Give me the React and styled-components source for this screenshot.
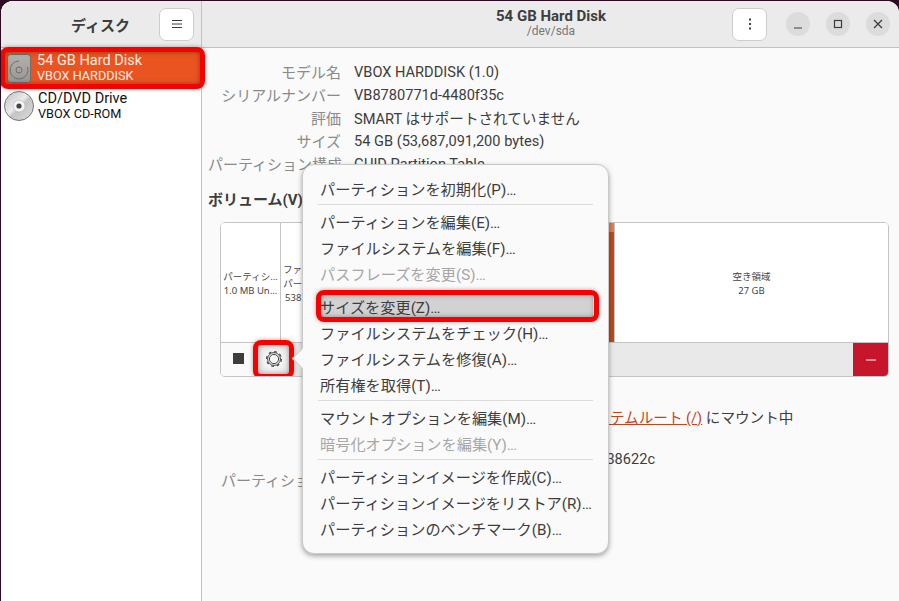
import React from "react";
import styled, {createGlobalStyle} from "styled-components";

const GlobalStyle = createGlobalStyle`
html, body {
    margin: 0;
    height: 100%;
    background: #2c0a22;
    font-family: Roboto, "Noto Sans CJK JP", sans-serif;
    font-size: 15px;
    color: #3d3d3d;
    overflow: hidden;
}
`;

const Window = styled.div`
position: relative;
display: flex;
box-sizing: border-box;
width: 898px;
height: 600px;
margin: 1px 0 0 1px;
border-radius: 12px 12px 0 0;
overflow: hidden;
background: #fafafa;
`;

const Sidebar = styled.aside`
display: flex;
flex-direction: column;
flex: 0 0 200px;
background: #fff;
border-right: 1px solid #c2c2c2;
`;

const Main = styled.main`
display: flex;
flex-direction: column;
flex: 1;
min-width: 0;
`;

const Header = styled.header`
display: grid;
grid-template-columns: 1fr auto 1fr;
align-items: center;
box-sizing: border-box;
height: 47px;
flex: none;
padding: ${(p) => (p.$main ? "0 9px 0 10px" : "0 7px 0 6px")};
background: #ebebeb;
border-bottom: 1px solid #c2c2c2;
`;

const SideTitle = styled.div`
grid-column: 2;
font-weight: 700;
font-size: 15px;
`;

const HeaderEnd = styled.div`
grid-column: 3;
display: flex;
align-items: center;
justify-content: flex-end;
`;

const HeadButton = styled.button`
display: flex;
align-items: center;
justify-content: center;
width: 35px;
height: 33px;
padding: 0;
background: #fff;
border: 1px solid #cdcdcd;
border-radius: 7px;
`;

const TitleBlock = styled.div`
grid-column: 2;
text-align: center;
line-height: 15px;
`;

const Title = styled.div`
font-weight: 700;
font-size: 15px;
`;

const Subtitle = styled.div`
font-size: 12px;
color: #777;
`;

const WindowButton = styled.button`
display: flex;
align-items: center;
justify-content: center;
width: 24px;
height: 24px;
margin-left: 16px;
padding: 0;
border: 0;
border-radius: 50%;
background: #dcdcdc;
`;

const MenuSpacer = styled.div`
width: 3px;
`;

const DeviceList = styled.div`
display: flex;
flex-direction: column;
padding-top: 3px;
`;

const Device = styled.div`
position: relative;
display: flex;
align-items: center;
gap: 3px;
height: ${(p) => (p.$selected ? "34px" : "36px")};
margin-bottom: ${(p) => (p.$selected ? "3px" : "0")};
padding-left: ${(p) => (p.$selected ? "6px" : "3px")};
background: ${(p) => (p.$selected ? "#e95420" : "transparent")};
color: ${(p) => (p.$selected ? "#fff" : "#111")};
`;

const DeviceText = styled.div`
margin-left: ${(p) => (p.$selected ? "3px" : "1px")};
line-height: 15px;
font-size: 14.5px;
opacity: ${(p) => (p.$selected ? 0.9 : 1)};
`;

const DeviceSub = styled.div`
font-size: 12.7px;
`;

const Highlight = styled.span`
position: absolute;
box-sizing: border-box;
top: ${(p) => p.$top}px;
right: ${(p) => p.$right}px;
bottom: ${(p) => p.$bottom}px;
left: ${(p) => p.$left}px;
border: 5px solid #f60000;
border-radius: 8px;
box-shadow: 0 0 4px rgba(0, 0, 0, 0.35), inset 0 0 5px rgba(0, 0, 0, 0.35);
pointer-events: none;
`;

const Content = styled.div`
flex: 1;
padding: 12px 10px 0 6px;
`;

const Details = styled.dl`
display: grid;
grid-template-columns: ${(p) => p.$label}px 1fr;
column-gap: 13px;
grid-auto-rows: ${(p) => p.$row}px;
align-items: center;
margin: 0;
white-space: nowrap;
`;

const Label = styled.dt`
text-align: right;
color: #8a8a8a;
`;

const Value = styled.dd`
margin: 0;
font-size: 14.6px;
color: #3d3d3d;
`;

const SectionTitle = styled.h2`
margin: 15px 0 11px;
font-size: 15px;
line-height: 21px;
font-weight: 700;
color: #3d3d3d;
`;

const VolumeBox = styled.div`
margin-left: 12px;
border: 1px solid #c4c4c4;
border-radius: 5px;
overflow: hidden;
`;

const VolumeMap = styled.div`
display: flex;
height: 119px;
background: #fff;
border-bottom: 1px solid #c4c4c4;
`;

const Partition = styled.div`
display: flex;
flex-direction: column;
align-items: center;
justify-content: center;
box-sizing: border-box;
flex: ${(p) => (p.$width ? `0 0 ${p.$width}px` : "1")};
padding-top: 2px;
font-family: "Noto Sans", "Noto Sans CJK JP", sans-serif;
font-size: 9.5px;
line-height: 14px;
color: #444;
white-space: nowrap;
overflow: hidden;
border-right: ${(p) => (p.$last ? "0" : "1px solid #c4c4c4")};
background: ${(p) => (p.$active ? "linear-gradient(#d8805f 0 9px, #c24a1c 9px, #bd491d)" : "#fff")};
`;

const VolumeToolbar = styled.div`
display: flex;
height: 33px;
background: #e9e9e9;
`;

const ToolButton = styled.button`
position: relative;
display: flex;
align-items: center;
justify-content: center;
width: 35px;
padding: 0 0 2px;
border: 0;
background: ${(p) => (p.$active ? "radial-gradient(#f6f6f6 30%, #d8d8d8)" : "#fafafa")};
`;

const DeleteButton = styled.button`
display: flex;
align-items: center;
justify-content: center;
width: 35px;
margin-left: auto;
padding: 0;
border: 0;
background: #c7162b;
`;

const StopIcon = styled.span`
width: 11px;
height: 11px;
background: #3d3d3d;
`;

const LowerDetails = styled.div`
margin: 8px 0 0 13px;
`;

const VolumeLink = styled.a`
color: #c7431a;
text-decoration: underline;
`;

const Popover = styled.div`
position: absolute;
top: 163px;
left: 301px;
box-sizing: border-box;
width: 307px;
height: 390px;
padding: 10px 15px 0;
font-size: 15.2px;
background: #fafafa;
border: 1px solid #c9c9c9;
border-radius: 12px;
box-shadow: 0 2px 5px rgba(0, 0, 0, 0.35);
`;

const PopoverArrow = styled.span`
position: absolute;
top: 186px;
left: -8px;
width: 14px;
height: 14px;
background: #fafafa;
border-left: 1px solid #c9c9c9;
border-bottom: 1px solid #c9c9c9;
transform: rotate(45deg);
`;

const MenuItem = styled.div`
position: relative;
display: flex;
align-items: center;
height: 26px;
padding-left: 2px;
white-space: nowrap;
color: ${(p) => (p.$disabled ? "#a6a6a6" : "#3d3d3d")};
background: ${(p) => (p.$active ? "#d2d2d2" : "transparent")};
`;

const MenuSeparator = styled.hr`
height: 1px;
margin: 3px 0;
border: 0;
background: #dcdcdc;
`;

const MenuHiddenSeparator = styled.div`
height: 7px;
`;

const HardDiskIcon = () => (
    <svg width="24" height="29" viewBox="0 0 24 29">
        <defs>
            <linearGradient id="hdd" x1="0" y1="0" x2="0" y2="1">
                <stop offset="0" stopColor="#b4b0ac" />
                <stop offset="1" stopColor="#989693" />
            </linearGradient>
        </defs>
        <rect x="0.5" y="0.5" width="23" height="28" rx="3" fill="url(#hdd)" stroke="#6f6c69" />
        <path d="M12 7a9 9 0 1 0 8.5 6" fill="none" stroke="#716e6a" strokeWidth="1" />
        <circle cx="12" cy="16" r="3" fill="none" stroke="#716e6a" />
    </svg>
);

const CdIcon = () => (
    <svg width="30" height="30" viewBox="0 0 30 30">
        <defs>
            <linearGradient id="cd" x1="0" y1="0" x2="1" y2="1">
                <stop offset="0" stopColor="#bdbdbd" />
                <stop offset="0.45" stopColor="#ececec" />
                <stop offset="0.55" stopColor="#c4c4c4" />
                <stop offset="1" stopColor="#dedede" />
            </linearGradient>
        </defs>
        <circle cx="15" cy="15" r="14.5" fill="url(#cd)" stroke="#777" />
        <circle cx="15" cy="15" r="6" fill="#f4f4f4" stroke="#aaa" strokeWidth="0.5" />
        <circle cx="15" cy="15" r="2.6" fill="#444" />
    </svg>
);

const HamburgerIcon = () => (
    <svg width="12" height="12" viewBox="0 0 12 12" stroke="#3d3d3d" strokeWidth="1">
        <path d="M1 2.5h10M1 6h10M1 9.5h10" />
    </svg>
);

const KebabIcon = () => (
    <svg width="4" height="12" viewBox="0 0 4 12" fill="#3d3d3d">
        <rect x="1" y="0.5" width="2" height="2" />
        <rect x="1" y="5" width="2" height="2" />
        <rect x="1" y="9.5" width="2" height="2" />
    </svg>
);

const MinimizeIcon = () => (
    <svg width="10" height="10" viewBox="0 0 10 10" stroke="#3d3d3d" strokeWidth="1.2">
        <path d="M1 9h8" />
    </svg>
);

const MaximizeIcon = () => (
    <svg width="10" height="10" viewBox="0 0 10 10" fill="none" stroke="#3d3d3d" strokeWidth="1.2">
        <rect x="1.5" y="1.5" width="7" height="7" />
    </svg>
);

const CloseIcon = () => (
    <svg width="10" height="10" viewBox="0 0 10 10" stroke="#3d3d3d" strokeWidth="1.3">
        <path d="M1 1l8 8M9 1L1 9" />
    </svg>
);

const RemoveIcon = () => (
    <svg width="10" height="10" viewBox="0 0 10 10" stroke="#fff" strokeWidth="1.2">
        <path d="M0 5h10" />
    </svg>
);

const GearIcon = () => (
    <svg width="18" height="18" viewBox="0 0 18 18" fill="none" stroke="#444">
        <circle cx="9" cy="9" r="4.6" strokeWidth="1" />
        <circle cx="9" cy="9" r="6.4" strokeWidth="1" />
        <circle cx="9" cy="9" r="7.4" strokeWidth="1.2" strokeDasharray="2.9 2.9" />
    </svg>
);

const menuGroups = [
    [{text: "パーティションを初期化(P)…"}],
    [
        {text: "パーティションを編集(E)…"},
        {text: "ファイルシステムを編集(F)…"},
        {text: "パスフレーズを変更(S)…", disabled: true},
    ],
    [
        {text: "サイズを変更(Z)…", active: true},
        {text: "ファイルシステムをチェック(H)…"},
        {text: "ファイルシステムを修復(A)…"},
        {text: "所有権を取得(T)…"},
    ],
    [
        {text: "マウントオプションを編集(M)…"},
        {text: "暗号化オプションを編集(Y)…", disabled: true},
    ],
    [
        {text: "パーティションイメージを作成(C)…"},
        {text: "パーティションイメージをリストア(R)…"},
        {text: "パーティションのベンチマーク(B)…"},
    ],
];

const App = () => {
    return (
        <>
            <GlobalStyle />
            <Window>
                <Sidebar>
                    <Header>
                        <SideTitle>ディスク</SideTitle>
                        <HeaderEnd>
                            <HeadButton><HamburgerIcon /></HeadButton>
                        </HeaderEnd>
                    </Header>
                    <DeviceList>
                        <Device $selected>
                            <HardDiskIcon />
                            <DeviceText $selected>
                                54 GB Hard Disk
                                <DeviceSub>VBOX HARDDISK</DeviceSub>
                            </DeviceText>
                            <Highlight $top={-4} $right={-4} $bottom={-4} $left={-1} />
                        </Device>
                        <Device>
                            <CdIcon />
                            <DeviceText>
                                CD/DVD Drive
                                <DeviceSub>VBOX CD-ROM</DeviceSub>
                            </DeviceText>
                        </Device>
                    </DeviceList>
                </Sidebar>
                <Main>
                    <Header $main>
                        <TitleBlock>
                            <Title>54 GB Hard Disk</Title>
                            <Subtitle>/dev/sda</Subtitle>
                        </TitleBlock>
                        <HeaderEnd>
                            <HeadButton><KebabIcon /></HeadButton>
                            <MenuSpacer />
                            <WindowButton><MinimizeIcon /></WindowButton>
                            <WindowButton><MaximizeIcon /></WindowButton>
                            <WindowButton><CloseIcon /></WindowButton>
                        </HeaderEnd>
                    </Header>
                    <Content>
                        <Details $label={133} $row={23}>
                            <Label>モデル名</Label><Value>VBOX HARDDISK (1.0)</Value>
                            <Label>シリアルナンバー</Label><Value>VB8780771d-4480f35c</Value>
                            <Label>評価</Label><Value>SMART はサポートされていません</Value>
                            <Label>サイズ</Label><Value>54 GB (53,687,091,200 bytes)</Value>
                            <Label>パーティション構成</Label><Value>GUID Partition Table</Value>
                        </Details>
                        <SectionTitle>ボリューム(V)</SectionTitle>
                        <VolumeBox>
                            <VolumeMap>
                                <Partition $width={60}>
                                    <div>パーティシ…</div>
                                    <div>1.0 MB Un…</div>
                                </Partition>
                                <Partition $width={60}>
                                    <div>ファイルシ…</div>
                                    <div>パーティシ…</div>
                                    <div>538 MB Fi…</div>
                                </Partition>
                                <Partition $width={274} $active />
                                <Partition $last>
                                    <div>空き領域</div>
                                    <div>27 GB</div>
                                </Partition>
                            </VolumeMap>
                            <VolumeToolbar>
                                <ToolButton><StopIcon /></ToolButton>
                                <ToolButton $active>
                                    <GearIcon />
                                    <Highlight $top={-3} $right={-3} $bottom={-3} $left={-3} />
                                </ToolButton>
                                <DeleteButton>
                                    <RemoveIcon />
                                </DeleteButton>
                            </VolumeToolbar>
                        </VolumeBox>
                        <LowerDetails>
                            <Details $label={146} $row={21}>
                                <Label /><Value />
                                <Label />
                                <Value>Ext4 (バージョン 1.0) <VolumeLink>ファイルシステムルート (/)</VolumeLink> にマウント中</Value>
                                <Label /><Value />
                                <Label /><Value>371a6c2e-90bd-4e17-a5d2-7cb1e838622c</Value>
                                <Label>パーティションタイプ</Label><Value />
                            </Details>
                        </LowerDetails>
                    </Content>
                </Main>
                <Popover>
                    <PopoverArrow />
                    {menuGroups.map((group, i) => (
                        <React.Fragment key={i}>
                            {i === 2 ? <MenuHiddenSeparator /> : i > 0 && <MenuSeparator />}
                            {group.map((item) => (
                                <MenuItem key={item.text} $disabled={item.disabled} $active={item.active}>
                                    {item.text}
                                    {item.active && <Highlight $top={-3} $right={-6} $bottom={-3} $left={-2} />}
                                </MenuItem>
                            ))}
                        </React.Fragment>
                    ))}
                </Popover>
            </Window>
        </>
    );
};

export default App;
